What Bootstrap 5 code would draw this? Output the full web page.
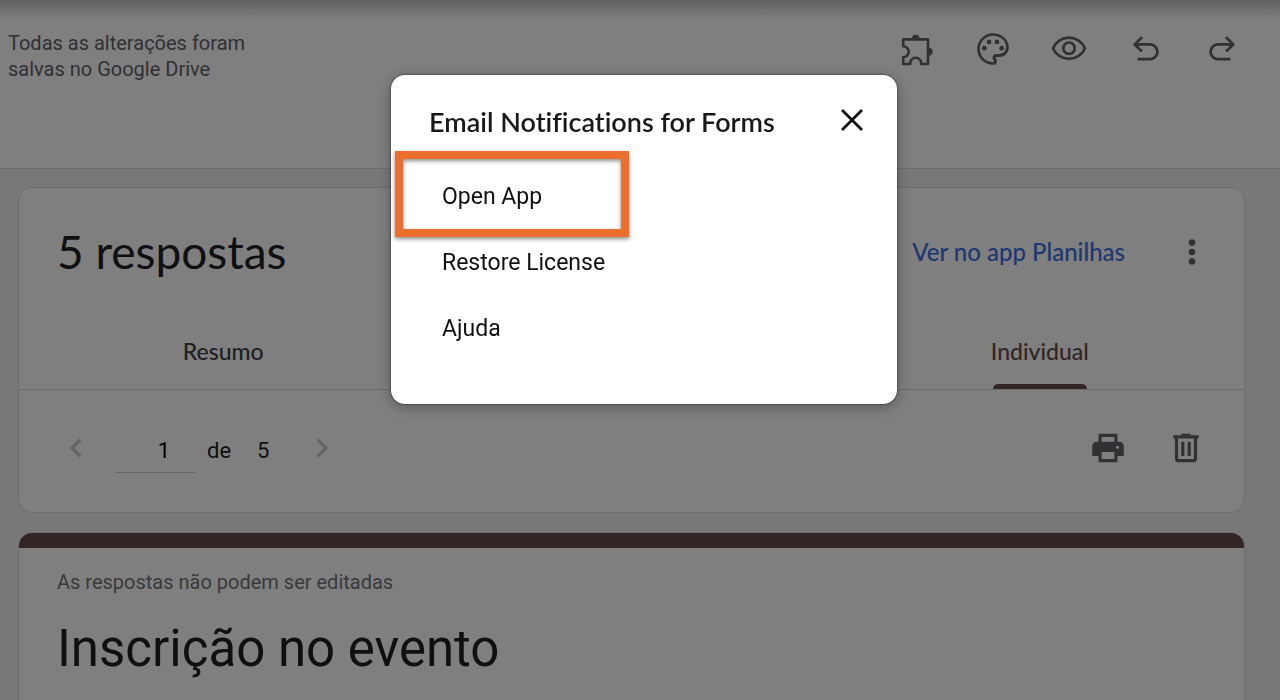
<!DOCTYPE html>
<html lang="pt-BR">
<head>
<meta charset="utf-8">
<meta name="viewport" content="width=device-width, initial-scale=1">
<title>Inscrição no evento</title>
<link href="https://cdn.jsdelivr.net/npm/bootstrap@5.3.0/dist/css/bootstrap.min.css" rel="stylesheet">
<style>
  body { background: #f0f0f0; color: #202124; font-family: Roboto, sans-serif; font-size: 22px; line-height: 26px; }
  .display-face { font-family: Lato, Roboto, sans-serif; font-variant-ligatures: none; }
  .topbar { min-height: 169px; border-bottom: 1px solid #d8d8d8; padding: 30px 21px 0 8px;
    background: linear-gradient(#c4c4c4, #fff 20px); }
  .save-note { color: #5f6368; font-size: 20px; width: 260px; }
  .icon-btn { color: #5f6368; border: 0; background: none; padding: 0; height: 38px; }
  .icon-btn svg, .btn-x svg { display: block; margin: auto; }
  .topbar .icon-btn { width: 76px; }
  .page-body { padding: 18px 35px 0 18px; }
  .panel { border: 1px solid #dadce0; border-radius: 14px; background: #fff; }
  .panel-head { padding: 33px 33px 0 38px; height: 128px; }
  .panel-row { height: 62px; }
  .count-title { font-size: 46px; line-height: 62px; font-weight: 400; }
  .sheet-link { color: #3c6fe0; font-size: 24px; font-weight: 500; }
  .tab-row { border-bottom: 1px solid #d4d4d4; }
  .tab-btn { border: 0; background: none; padding: 21px 0 0; height: 73px; font-size: 23px; font-weight: 500; line-height: 28px; color: #3c4043; }
  .tab-btn.active { color: #684a4a; }
  .tab-btn .bar { width: 94px; height: 5px; border-radius: 5px 5px 0 0; }
  .tab-btn.active .bar { background: #684a4a; }
  .pager-row { padding: 39px 39px 39px 38px; }
  .pager-row .icon-btn { margin-bottom: 6px; }
  .page-input { width: 80px; height: 44px; border: 0; border-bottom: 1px solid #d0d0d0; background: none; text-align: center; padding: 0 0 0 18px; margin-left: 20px; }
  .pager-gap { margin-left: 12px; }
  .total-gap { margin: 0 10px 0 26px; }
  .faded { opacity: .35; }
  .form-panel { margin-top: 19px; overflow: hidden; }
  .color-strip { height: 15px; background: #684a4a; }
  .form-body { padding: 21px 38px 60px; }
  .muted-note { color: #70757a; font-size: 20px; }
  .form-title { font-size: 51px; line-height: 60px; font-weight: 400; margin: 24px 0 0; }
  .modal-backdrop.show { opacity: .5; }
  .modal { padding-left: 8px; }
  .addon-dialog { max-width: 506px; margin: 75px auto; }
  .addon-box { border: 0; border-radius: 14px; padding-bottom: 42px; box-shadow: 0 3px 14px rgba(0,0,0,.3), 0 0 2px #222; }
  .addon-head { padding: 27px 27px 0 38px; height: 89px; }
  .addon-title { font-size: 27px; line-height: 40px; font-weight: 600; color: #18191c; }
  .btn-x { border: 0; background: none; padding: 0; color: #111; width: 36px; height: 36px; }
  .menu-btn { height: 66px; padding: 0 51px; font-size: 23px; color: #111; text-align: left; border: 0; background: none; }
  .callout-frame { top: -13px; left: 4px; width: 234px; height: 86px; border: 8px solid #ec6e2d; pointer-events: none;
    filter: drop-shadow(0 2px 2px rgba(0,0,0,.45)); }
</style>
</head>
<body class="overflow-hidden">
<header class="topbar d-flex justify-content-between align-items-start">
  <div class="save-note">Todas as alterações foram salvas no Google Drive</div>
  <nav class="d-flex" aria-label="Ferramentas">
    <button class="icon-btn" aria-label="Complementos"><svg width="38" height="38" viewBox="0 0 38 38"><path fill="none" stroke="currentColor" stroke-width="2.6" stroke-linejoin="round" d="M5.2 9.4H30V34h-6.8v-.8a5.500 5.500 0 0 0-11 0v.8H5.200v-6.700a5.500 5.500 0 0 0 0-11z"/><path fill="currentColor" d="M13.800 9a3.900 4.300 0 0 1 7.800 0zM30.500 17.800a4.200 4 0 0 1 0 8z"/></svg></button>
    <button class="icon-btn" aria-label="Personalizar tema"><svg width="38" height="38" viewBox="0 0 24 24" fill="currentColor"><path d="M12 22C6.490 22 2 17.510 2 12S6.490 2 12 2s10 4.040 10 9c0 3.310-2.690 6-6 6h-1.770c-.28 0-.5.22-.5.5 0 .12.05.23.13.33.41.47.64 1.060.64 1.670A2.500 2.500 0 0 1 12 22zm0-18.300c-4.500 0-8.300 3.700-8.300 8.300s3.700 8.300 8.300 8.300c.3 0 .5-.2.5-.6 0-.2-.1-.3-.2-.5-.4-.4-.6-1-.6-1.600a2.500 2.500 0 0 1 2.500-2.500H16c2.400 0 4.300-1.900 4.300-4.200 0-4-3.800-7.200-8.300-7.200z"/><circle cx="6.500" cy="11.500" r="1.500"/><circle cx="9.500" cy="7.500" r="1.500"/><circle cx="14.500" cy="7.500" r="1.500"/><circle cx="17.500" cy="11.500" r="1.500"/></svg></button>
    <button class="icon-btn" aria-label="Visualizar"><svg width="38" height="38" viewBox="0 0 24 24" fill="none" stroke="currentColor" stroke-width="1.7"><path stroke-linejoin="round" d="M12 4.800c-4.500 0-8.500 2.700-10.100 6.700 1.600 4 5.600 6.700 10.100 6.700s8.500-2.700 10.100-6.700C20.500 7.500 16.500 4.800 12 4.800z"/><circle cx="12" cy="11.500" r="3.600"/></svg></button>
    <button class="icon-btn" aria-label="Desfazer"><svg width="38" height="38" viewBox="0 0 38 38" fill="none" stroke="currentColor" stroke-width="2.700"><path d="M8.500 14.400h15.500a7.400 7.400 0 0 1 0 14.800H11.500M16 7.300l-7.300 7.100 7.300 7.100"/></svg></button>
    <button class="icon-btn" aria-label="Refazer"><svg width="38" height="38" viewBox="0 0 38 38" fill="none" stroke="currentColor" stroke-width="2.700"><path d="M31.500 14.400H16a7.400 7.400 0 0 0 0 14.800h12.500M24 7.300l7.300 7.100-7.300 7.100"/></svg></button>
  </nav>
</header>

<main class="page-body">
  <section class="panel">
    <div class="panel-head d-flex justify-content-between align-items-start">
      <h1 class="count-title display-face mb-0">5 respostas</h1>
      <div class="panel-row d-flex align-items-center">
        <a href="#" class="sheet-link display-face text-decoration-none me-5">Ver no app Planilhas</a>
        <button class="icon-btn" aria-label="Mais opções"><svg width="38" height="38" viewBox="0 0 38 38" fill="currentColor"><circle cx="19" cy="9.500" r="3.300"/><circle cx="19" cy="19" r="3.300"/><circle cx="19" cy="28.500" r="3.300"/></svg></button>
      </div>
    </div>
    <div class="tab-row row g-0" role="tablist">
      <button class="tab-btn display-face col-4 d-flex flex-column align-items-center justify-content-between" role="tab" aria-selected="false">Resumo<span class="bar"></span></button>
      <button class="tab-btn display-face col-4 offset-4 active d-flex flex-column align-items-center justify-content-between" role="tab" aria-selected="true">Individual<span class="bar"></span></button>
    </div>
    <div class="pager-row d-flex justify-content-between align-items-center">
      <div class="d-flex align-items-center">
        <button class="icon-btn faded" aria-label="Resposta anterior"><svg width="38" height="38" viewBox="0 0 24 24" fill="currentColor"><path d="M15.410 7.410 14 6l-6 6 6 6 1.410-1.410L10.830 12z"/></svg></button>
        <input class="page-input" aria-label="Resposta" value="1">
        <span class="pager-gap">de</span><span class="total-gap">5</span>
        <button class="icon-btn faded ms-4" aria-label="Próxima resposta"><svg width="38" height="38" viewBox="0 0 24 24" fill="currentColor"><path d="M10 6 8.590 7.410 13.170 12l-4.580 4.590L10 18l6-6z"/></svg></button>
      </div>
      <div class="d-flex gap-4">
        <button class="icon-btn me-3" aria-label="Imprimir"><svg width="38" height="38" viewBox="0 0 24 24" fill="currentColor"><path fill-rule="evenodd" d="M18 8V3H6v5H5c-1.660 0-3 1.340-3 3v6h4v4h12v-4h4v-6c0-1.660-1.340-3-3-3zM8 5h8v3H8zm8 14H8v-4.500h8zm2-8.500a1 1 0 1 1 0 2 1 1 0 0 1 0-2z"/></svg></button>
        <button class="icon-btn" aria-label="Excluir"><svg width="38" height="38" viewBox="0 0 24 24" fill="currentColor"><path fill-rule="evenodd" d="M15 4V3H9v1H4v2h1v13c0 1.100.9 2 2 2h10c1.100 0 2-.9 2-2V6h1V4zm2 15H7V6h10zM9 8h2v9H9zm4 0h2v9h-2z"/></svg></button>
      </div>
    </div>
  </section>
  <section class="panel form-panel">
    <div class="color-strip"></div>
    <div class="form-body">
      <div class="muted-note">As respostas não podem ser editadas</div>
      <h2 class="form-title">Inscrição no evento</h2>
    </div>
  </section>
</main>

<div class="modal-backdrop show"></div>
<div class="modal show d-block" role="dialog" aria-modal="true" aria-labelledby="addonTitle">
  <div class="modal-dialog addon-dialog">
    <div class="modal-content addon-box">
      <div class="addon-head d-flex justify-content-between align-items-start">
        <h2 class="addon-title display-face mb-0" id="addonTitle">Email Notifications for Forms</h2>
        <button class="btn-x" aria-label="Fechar"><svg width="36" height="36" viewBox="0 0 36 36" fill="none" stroke="currentColor" stroke-width="2.800"><path d="M8 8l20 20M28 8L8 28"/></svg></button>
      </div>
      <ul class="list-unstyled mb-0">
        <li class="position-relative"><button class="menu-btn w-100">Open App</button><span class="callout-frame position-absolute"></span></li>
        <li><button class="menu-btn w-100">Restore License</button></li>
        <li><button class="menu-btn w-100">Ajuda</button></li>
      </ul>
    </div>
  </div>
</div>
<script src="https://cdn.jsdelivr.net/npm/bootstrap@5.3.0/dist/js/bootstrap.bundle.min.js"></script>
</body>
</html>
